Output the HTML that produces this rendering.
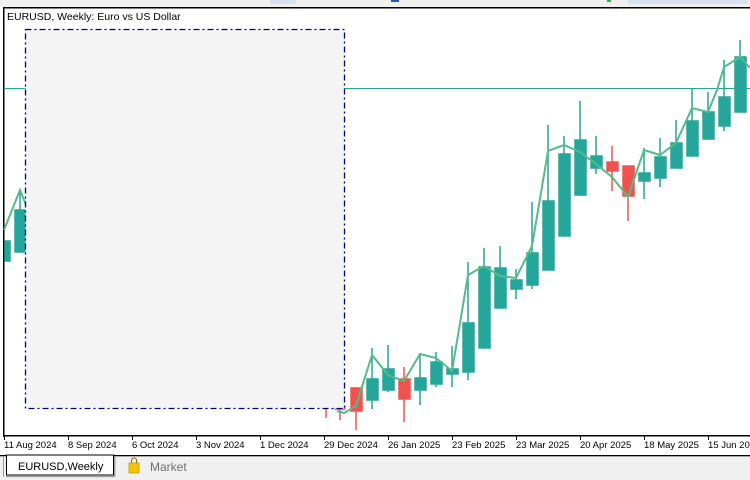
<!DOCTYPE html>
<html><head><meta charset="utf-8"><style>
html,body{margin:0;padding:0;width:750px;height:480px;overflow:hidden;background:#fff;font-family:"Liberation Sans",sans-serif}
</style></head><body>
<svg width="750" height="480" viewBox="0 0 750 480" xmlns="http://www.w3.org/2000/svg" style="display:block">
<rect x="0" y="0" width="750" height="7" fill="#f0f0f0"/>
<rect x="270" y="0" width="26" height="4" fill="#d6e2f0"/>
<rect x="628" y="0" width="120" height="4" fill="#d6e2f0"/>
<rect x="391" y="0" width="8" height="2" fill="#1f5fa8"/>
<rect x="607" y="0" width="4" height="2" fill="#2db84a"/>
<rect x="3" y="7" width="747" height="1.5" fill="#000"/>
<rect x="3" y="7" width="1.5" height="430" fill="#000"/>
<line x1="4" y1="88.5" x2="750" y2="88.5" stroke="#26a69a" stroke-width="1"/>
<g fill="#26a69a" stroke="#26a69a" stroke-width="1.5">
<line x1="7" y1="241" x2="7" y2="261"/><rect x="5" y="241" width="5" height="20"/>
<line x1="20" y1="190" x2="20" y2="252"/><rect x="15" y="210" width="11" height="42"/>
</g>
<polyline fill="none" stroke="#55bb88" stroke-width="2" points="4,230 20,190 26,205"/>
<g stroke-width="1.5">
<g stroke="#ef5350" fill="#ef5350">
<line x1="326" y1="404" x2="326" y2="418"/>
<line x1="340" y1="406" x2="340" y2="420"/><rect x="335" y="407" width="10" height="2"/>
<line x1="356" y1="387" x2="356" y2="430"/><rect x="351" y="388" width="11" height="23"/>
<line x1="404" y1="367" x2="404" y2="422"/><rect x="399" y="379" width="11" height="20"/>
<line x1="612" y1="146" x2="612" y2="191"/><rect x="607" y="162" width="11" height="9"/>
<line x1="628" y1="166" x2="628" y2="221"/><rect x="623" y="166" width="11" height="30"/>
</g>
<g stroke="#26a69a" fill="#26a69a">
<line x1="372" y1="348" x2="372" y2="409"/><rect x="367" y="379" width="11" height="21"/>
<line x1="388" y1="345" x2="388" y2="392"/><rect x="383" y="369" width="11" height="21"/>
<line x1="420" y1="353" x2="420" y2="405"/><rect x="415" y="378" width="11" height="12"/>
<line x1="436" y1="352" x2="436" y2="387"/><rect x="431" y="362" width="11" height="22"/>
<line x1="452" y1="346" x2="452" y2="387"/><rect x="447" y="369" width="11" height="5"/>
<line x1="468" y1="262" x2="468" y2="380"/><rect x="463" y="323" width="11" height="49"/>
<line x1="484" y1="248" x2="484" y2="348"/><rect x="479" y="267" width="11" height="81"/>
<line x1="500" y1="246" x2="500" y2="308"/><rect x="495" y="268" width="11" height="40"/>
<line x1="516" y1="269" x2="516" y2="299"/><rect x="511" y="280" width="11" height="9"/>
<line x1="532" y1="202" x2="532" y2="289"/><rect x="527" y="253" width="11" height="32"/>
<line x1="548" y1="125" x2="548" y2="270"/><rect x="543" y="201" width="11" height="69"/>
<line x1="564" y1="136" x2="564" y2="236"/><rect x="559" y="154" width="11" height="82"/>
<line x1="580" y1="101" x2="580" y2="195"/><rect x="575" y="140" width="11" height="55"/>
<line x1="596" y1="136" x2="596" y2="174"/><rect x="591" y="156" width="11" height="12"/>
<line x1="644" y1="148" x2="644" y2="199"/><rect x="639" y="173" width="11" height="8"/>
<line x1="660" y1="138" x2="660" y2="187"/><rect x="655" y="157" width="11" height="21"/>
<line x1="676" y1="120" x2="676" y2="168"/><rect x="671" y="143" width="11" height="25"/>
<line x1="692" y1="88" x2="692" y2="156"/><rect x="687" y="121" width="11" height="35"/>
<line x1="708" y1="92" x2="708" y2="139"/><rect x="703" y="112" width="11" height="27"/>
<line x1="724" y1="60" x2="724" y2="131"/><rect x="719" y="97" width="11" height="29"/>
<line x1="740" y1="40" x2="740" y2="112"/><rect x="735" y="57" width="11" height="55"/>
</g>
</g>
<polyline fill="none" stroke="#55bb88" stroke-width="2" points="337,411 344,413 356,406 372,355 388,375 404,381 420,354 436,358 452,371 468,275 484,266 500,276 516,278 532,246 548,151 564,145 580,152 596,164 612,177 628,197 644,150 660,155 676,143 692,108 708,112 717,90 724,67 740,57 750,68"/>
<rect x="25.5" y="29.5" width="319" height="379" fill="#f4f4f4" stroke="#00008b" stroke-width="1.3" stroke-dasharray="6,3,2,3"/>
<text x="7" y="20" font-size="10.5" fill="#000">EURUSD, Weekly:  Euro vs US Dollar</text>
<rect x="3" y="435" width="747" height="1.5" fill="#000"/>
<g stroke="#000" stroke-width="1">
<line x1="4.5" y1="436" x2="4.5" y2="440"/><line x1="68.5" y1="436" x2="68.5" y2="440"/><line x1="132.5" y1="436" x2="132.5" y2="440"/><line x1="196.5" y1="436" x2="196.5" y2="440"/><line x1="260.5" y1="436" x2="260.5" y2="440"/><line x1="324.5" y1="436" x2="324.5" y2="440"/><line x1="388.5" y1="436" x2="388.5" y2="440"/><line x1="452.5" y1="436" x2="452.5" y2="440"/><line x1="516.5" y1="436" x2="516.5" y2="440"/><line x1="580.5" y1="436" x2="580.5" y2="440"/><line x1="644.5" y1="436" x2="644.5" y2="440"/><line x1="708.5" y1="436" x2="708.5" y2="440"/>
</g>
<g font-size="9.5" fill="#000">
<text x="4" y="448">11 Aug 2024</text><text x="68" y="448">8 Sep 2024</text><text x="132" y="448">6 Oct 2024</text><text x="196" y="448">3 Nov 2024</text><text x="260" y="448">1 Dec 2024</text><text x="324" y="448">29 Dec 2024</text><text x="388" y="448">26 Jan 2025</text><text x="452" y="448">23 Feb 2025</text><text x="516" y="448">23 Mar 2025</text><text x="580" y="448">20 Apr 2025</text><text x="644" y="448">18 May 2025</text><text x="708" y="448">15 Jun 2025</text>
</g>
<rect x="0" y="455" width="750" height="25" fill="#f0f0f0"/>
<rect x="0" y="455" width="750" height="1.3" fill="#000"/>
<rect x="3" y="456" width="1" height="21" fill="#a0a0a0"/>
<rect x="6.5" y="455" width="107" height="20" fill="#fff" stroke="#000" stroke-width="1"/>
<rect x="114" y="456" width="1.5" height="21" fill="#a0a0a0"/>
<rect x="6" y="476" width="109" height="1.2" fill="#a0a0a0"/>
<text x="18" y="470" font-size="11" fill="#000">EURUSD,Weekly</text>
<path d="M129 463 h10 v10 h-10z" fill="#f5c400" stroke="#c89a00" stroke-width="0.8"/>
<path d="M131.5 463 v-2.5 a2.5 2.5 0 0 1 5 0 v2.5" fill="none" stroke="#8a6a00" stroke-width="1"/>
<text x="150" y="471" font-size="12" fill="#707070">Market</text>
</svg>
</body></html>
